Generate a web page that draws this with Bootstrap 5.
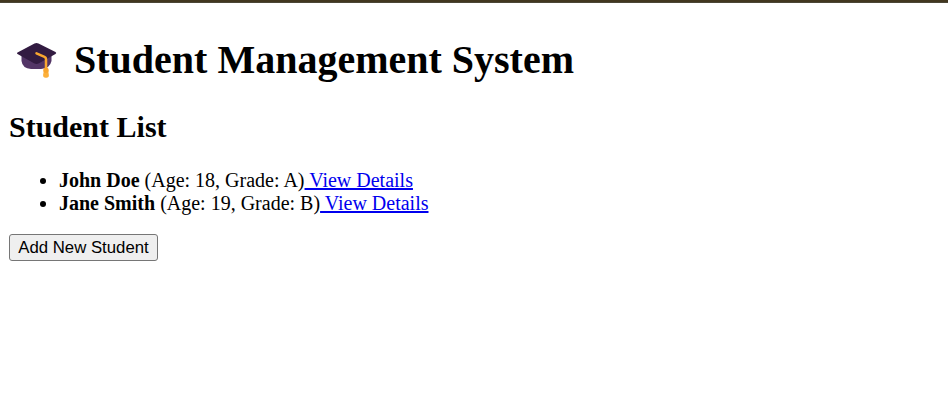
<!DOCTYPE html>
<html lang="en">
<head>
<meta charset="utf-8">
<meta name="viewport" content="width=device-width, initial-scale=1">
<title>Student Management System</title>
<link href="https://cdn.jsdelivr.net/npm/bootstrap@5.3.0/dist/css/bootstrap.min.css" rel="stylesheet">
<style>
body { font-family: "Liberation Serif", "Times New Roman", serif; font-size: 20px; line-height: 23px; color: #000; background: #fff; }
.top-edge { height: 3px; background: #42371f; border-bottom: 1px solid #4b4636; }
.page { padding: 34px 9px 0; }
.page-title { font-size: 40px; line-height: 46px; gap: 17px; padding-left: 7px; }
.cap-icon { width: 41px; height: 36px; }
.section-title { font-size: 30px; line-height: 34px; margin: 27px 0 25px; }
.student-list { padding-left: 50px; margin-bottom: 19px; }
.student-list a { color: #0000ee; }
.add-btn { font-family: "Liberation Sans", Arial, sans-serif; font-size: 16.75px; line-height: 19px; width: 149px; padding: 3px 0; white-space: nowrap; color: #000; background: #efefef; border: 1px solid #767676; border-radius: 3px; }
</style>
</head>
<body>
<div class="top-edge"></div>
<main class="page">
  <h1 class="page-title d-flex align-items-center fw-bold mb-0">
    <svg class="cap-icon flex-shrink-0" viewBox="0 0 41 36" aria-hidden="true">
      <path d="M5.500 12V19Q6.500 26.500 15 27H25Q34 26.500 35.500 19V12Z" fill="#533566"/>
      <path d="M1.500 10.500 18.500 1.500Q20.500.5 22.500 1.500L39.500 10Q41 11 39.500 12L23 21.300Q20.500 22.500 18 21.300L1.500 12Q.2 11.200 1.500 10.500Z" fill="#321b41"/>
      <path d="M20.500 11.300 28.500 14.800Q30 15.500 30 17V28" fill="none" stroke="#f9a62f" stroke-width="2.500" stroke-linecap="round"/>
      <path d="M28 28H32L32.900 33Q33 35.700 30.500 35.700H29.500Q27 35.700 27.100 33Z" fill="#fcb03b"/>
      <circle cx="30" cy="28.300" r="2.700" fill="#f9a62f"/>
    </svg>
    <span>Student Management System</span>
  </h1>
  <h2 class="section-title fw-bold">Student List</h2>
  <ul class="student-list">
    <li><strong>John Doe</strong> (Age: 18, Grade: A)<a href="#"> View Details</a></li>
    <li><strong>Jane Smith</strong> (Age: 19, Grade: B)<a href="#"> View Details</a></li>
  </ul>
  <button type="button" class="add-btn d-block text-center">Add New Student</button>
</main>
<script src="https://cdn.jsdelivr.net/npm/bootstrap@5.3.0/dist/js/bootstrap.bundle.min.js"></script>
</body>
</html>
